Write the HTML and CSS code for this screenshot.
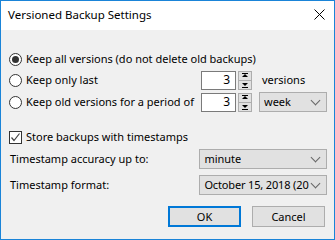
FILE: index.html
```html
<!DOCTYPE html>
<html>
<head>
<meta charset="utf-8">
<link rel="stylesheet" href="styles.css">
</head>
<body>
<div class="window">
  <div class="titlebar">
    <span class="title">Versioned Backup Settings</span>
    <svg class="close" width="11" height="11" viewBox="0 0 11 11"><path d="M0.5 0.5 L10.5 10.5 M10.5 0.5 L0.5 10.5" stroke="#000" stroke-width="1"/></svg>
  </div>
  <div class="content">
    <div class="row r1">
      <span class="radio checked"></span><span class="text">Keep all versions (do not delete old backups)</span>
    </div>
    <div class="row r2">
      <div class="lbl"><span class="radio"></span><span class="text">Keep only last</span></div>
      <div class="spin"><span class="num">3</span></div>
      <div class="spinbtns"><span class="sb up"></span><span class="sb down"></span></div>
      <span class="text unit">versions</span>
    </div>
    <div class="row r3">
      <div class="lbl"><span class="radio"></span><span class="text">Keep old versions for a period of</span></div>
      <div class="spin"><span class="num">3</span></div>
      <div class="spinbtns"><span class="sb up"></span><span class="sb down"></span></div>
      <div class="combo week"><span class="val">week</span><span class="chev"></span></div>
    </div>
    <div class="row r4">
      <span class="check"><svg width="11" height="11" viewBox="0 0 11 11"><path d="M1.5 5.5 L4 8.5 L9.5 1.5" fill="none" stroke="#444" stroke-width="1.2"/></svg></span><span class="text">Store backups with timestamps</span>
    </div>
    <div class="row r5">
      <span class="text flabel">Timestamp accuracy up to:</span>
      <div class="combo wide"><span class="val">minute</span><span class="chev"></span></div>
    </div>
    <div class="row r6">
      <span class="text flabel">Timestamp format:</span>
      <div class="combo wide"><span class="val tight">October 15, 2018 (20</span><span class="chev"></span></div>
    </div>
    <div class="buttons">
      <button class="btn ok">OK</button>
      <button class="btn">Cancel</button>
    </div>
  </div>
</div>
</body>
</html>
```
FILE: styles.css
```css
* { box-sizing: border-box; }
html, body { margin: 0; padding: 0; }
body {
  width: 335px;
  height: 240px;
  font-family: "Noto Sans", "Open Sans", sans-serif;
  font-size: 11px;
  color: #000;
  overflow: hidden;
}
.window {
  width: 335px;
  height: 240px;
  border: 1px solid #1a84d8;
  background: #f0f0f0;
  display: flex;
  flex-direction: column;
}
.titlebar {
  height: 29px;
  background: #fff;
  display: flex;
  align-items: center;
  justify-content: space-between;
  padding: 0 9px 0 7px;
}
.title { font-size: 11.5px; line-height: 16px; margin-top: -1px; }
.close { display: block; margin-top: -2px; }
.content {
  flex: 1;
  padding: 19px 7px 0 8px;
  display: flex;
  flex-direction: column;
}
.row {
  display: flex;
  align-items: center;
  height: 20px;
}
.r2 { margin-top: 1px; }
.r3 { margin-top: 2px; }
.r4 { margin-top: 15px; }
.r5 { margin-top: 2px; }
.r6 { margin-top: 6px; }
.text { white-space: nowrap; line-height: 16px; }
.lbl { width: 192px; display: flex; align-items: center; }
.radio {
  width: 13px;
  height: 13px;
  border: 1px solid #333;
  border-radius: 50%;
  background: #fff;
  margin-right: 4px;
  flex: none;
  position: relative;
}
.radio.checked::after {
  content: "";
  position: absolute;
  left: 2px;
  top: 2px;
  width: 7px;
  height: 7px;
  border-radius: 50%;
  background: #333;
}
.check {
  width: 13px;
  height: 13px;
  border: 1px solid #333;
  background: #fff;
  margin-right: 4px;
  flex: none;
  display: flex;
  align-items: center;
  justify-content: center;
}
.check svg { display: block; }
.spin {
  width: 35px;
  height: 19px;
  background: #fff;
  border: 1px solid #7a7a7a;
  display: flex;
  align-items: center;
  justify-content: flex-end;
  padding-right: 5px;
}
.num { line-height: 16px; font-size: 12px; }
.spinbtns {
  margin-left: 2px;
  width: 14px;
  height: 19px;
  display: flex;
  flex-direction: column;
}
.sb {
  flex: 1;
  background: #e1e1e1;
  border: 1px solid #adadad;
  position: relative;
}
.sb.down { border-top: none; }
.sb::after {
  content: "";
  position: absolute;
  left: 3px;
  width: 0;
  height: 0;
  border-left: 3px solid transparent;
  border-right: 3px solid transparent;
}
.sb.up::after { top: 2px; border-bottom: 3px solid #000; }
.sb.down::after { top: 2px; border-top: 3px solid #000; }
.sb.down::before {
  content: "";
  position: absolute;
  left: 3px;
  top: 6px;
  width: 6px;
  height: 1px;
  background: #000;
}
.sb.up::before {
  content: "";
  position: absolute;
  left: 3px;
  top: 1px;
  width: 6px;
  height: 1px;
  background: #000;
}
.unit { margin-left: 10px; }
.combo {
  height: 20px;
  background: #e1e1e1;
  border: 1px solid #adadad;
  display: flex;
  align-items: center;
  justify-content: space-between;
  padding: 0 5px 0 4px;
}
.combo .val { line-height: 16px; white-space: nowrap; overflow: hidden; }
.combo .tight { letter-spacing: -0.15px; }
.chev {
  width: 7px;
  height: 7px;
  border-right: 1px solid #666;
  border-bottom: 1px solid #666;
  transform: rotate(45deg);
  margin-top: -4px;
  margin-right: 2px;
  margin-left: 3px;
  flex: none;
}
.week { width: 68px; margin-left: 7px; }
.flabel { width: 190px; margin-left: 1px; }
.wide { width: 128px; }
.buttons {
  margin-top: 11px;
  display: flex;
  justify-content: flex-end;
  gap: 11px;
  padding-right: 2px;
}
.btn {
  width: 73px;
  height: 21px;
  font-family: inherit;
  font-size: 11px;
  color: #000;
  background: #e1e1e1;
  border: 1px solid #adadad;
  padding: 0;
  line-height: 16px;
}
.btn.ok { border: 2px solid #0078d7; }
```
